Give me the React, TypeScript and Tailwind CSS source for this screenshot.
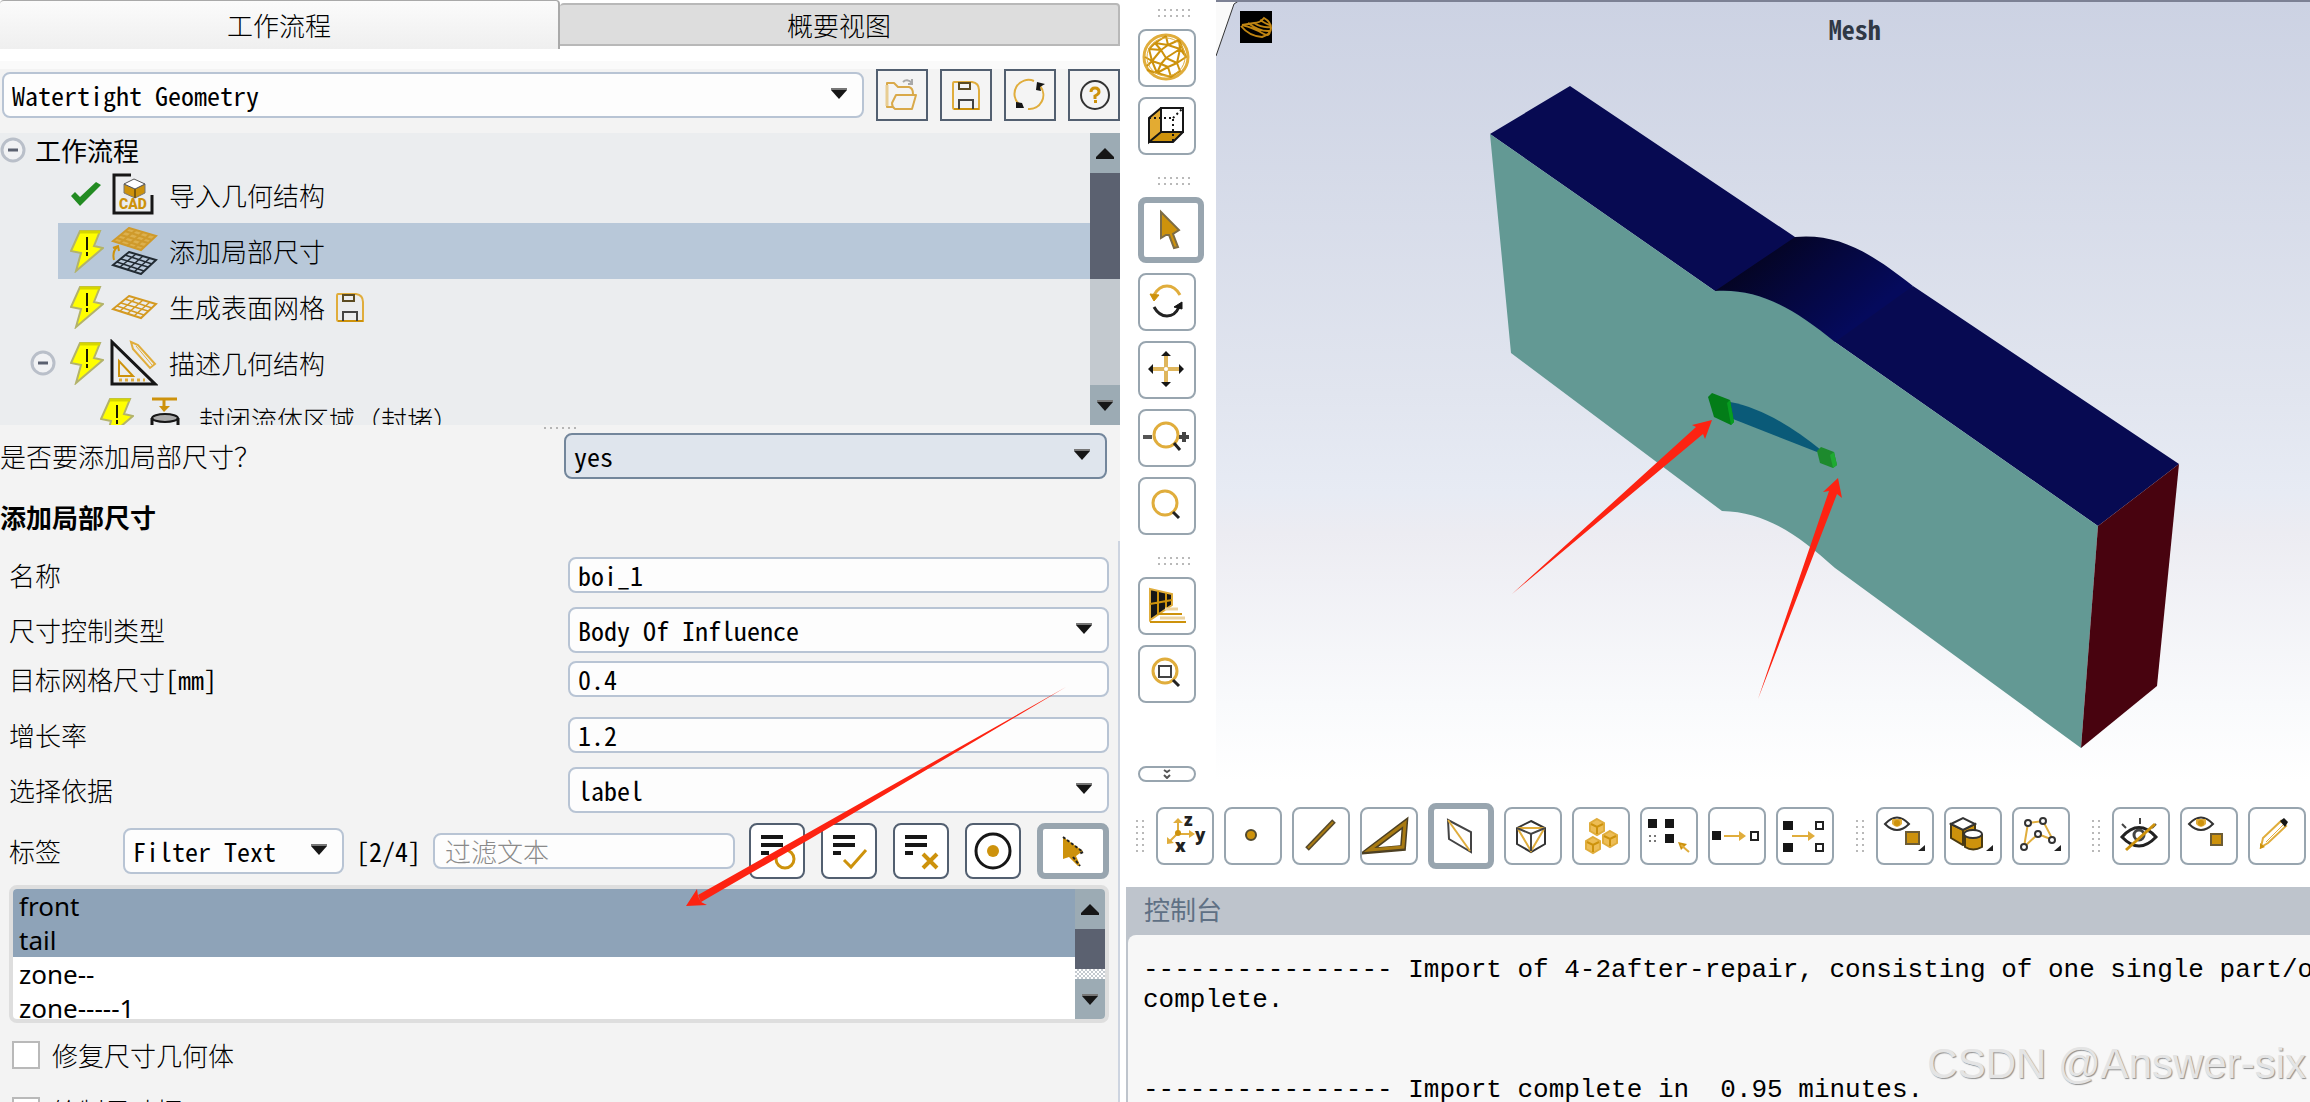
import React from "react";

const GOLD = "#cd920c";
const LIGHT_GOLD = "#e0ad3c";
const INK = "#161616";

type IconProps = { w?: number; h?: number; children: React.ReactNode };

function Icon({ w = 58, h = 58, children }: IconProps) {
  return (
    <svg width={w} height={h} viewBox={`0 0 ${w} ${h}`} fill="none" aria-hidden="true" className="block shrink-0">
      {children}
    </svg>
  );
}

/* ---------- shared pieces ---------- */

function Caret({ up = false }: { up?: boolean }) {
  return (
    <svg width="18" height="11" viewBox="0 0 18 11" aria-hidden="true" className="block">
      {up ? (
        <path d="M9 0 18 9v2H0V9z" fill={INK} />
      ) : (
        <>
          <path d="M1 0h16v2H1z" fill="#777" />
          <path d="M1 2h16L9 11z" fill={INK} />
        </>
      )}
    </svg>
  );
}

function Combo({ id, label, value, className = "", tone = "light" }: { id: string; label?: string; value: string; className?: string; tone?: "light" | "active" }) {
  return (
    <div className={"relative " + className}>
      <select
        id={id}
        aria-label={label}
        defaultValue={value}
        className={
          "block h-[46px] w-full appearance-none rounded-lg border-2 pr-12 pl-2 font-['Noto_Sans_Mono_CJK_SC','Liberation_Mono',monospace] text-[26px] leading-10 text-black outline-none " +
          (tone === "active" ? "border-[#73869b] bg-[#dfe5ed]" : "border-[#b8c4d4] bg-[#fdfdfd]")
        }
      >
        <option>{value}</option>
      </select>
      <span className="pointer-events-none absolute top-4 right-4">
        <Caret />
      </span>
    </div>
  );
}

function TextField({ id, value }: { id: string; value: string }) {
  return (
    <input
      id={id}
      type="text"
      defaultValue={value}
      className="block h-9 w-full rounded-lg border-2 border-[#b8c4d4] bg-[#fdfdfd] px-2 font-['Noto_Sans_Mono_CJK_SC','Liberation_Mono',monospace] text-[26px] outline-none"
    />
  );
}

function ScrollBar({ children }: { children: React.ReactNode }) {
  return (
    <div className="flex w-[30px] shrink-0 flex-col">
      <button type="button" aria-label="向上滚动" className="flex h-10 shrink-0 items-center justify-center bg-[#9cabb4]">
        <Caret up />
      </button>
      {children}
      <button type="button" aria-label="向下滚动" className="flex h-10 shrink-0 items-center justify-center bg-[#9cabb4]">
        <Caret />
      </button>
    </div>
  );
}

function FormRow({ id, label, children, className = "" }: { id: string; label: React.ReactNode; children: React.ReactNode; className?: string }) {
  return (
    <div className={"grid grid-cols-[559fr_541fr] items-center " + className}>
      <label htmlFor={id} className="flex h-9 items-center">
        {label}
      </label>
      {children}
    </div>
  );
}

/* ---------- header icons (48 × 48) ---------- */

const folderIcon = (
  <Icon w={48} h={48}>
    <g stroke="#d9a94a" strokeWidth="2" strokeLinejoin="round">
      <path d="M15 36H9V12h7l4 4h11q4 1 4 7" />
      <path d="M9 14v21" strokeWidth="3" stroke="#e8cd92" />
      <path d="M18 24h20l-4 14H17q-3-2-3-6z" />
    </g>
    <path d="M25 11q4-4 9 1M34 8v5h-4" stroke="#a8a8a8" strokeWidth="2" />
  </Icon>
);

function SaveArt() {
  return (
    <>
      <path d="M2 1h18q7 1 7 8v19H2q-1 0-1-2V3q0-2 1-2z" stroke={LIGHT_GOLD} strokeWidth="2" />
      <path d="M2 28h25" stroke={GOLD} strokeWidth="2" />
      <path d="M7 2h11v6H7z" stroke="#5c4c22" strokeWidth="2" />
      <path d="M7 28V19h14v9" stroke="#444" strokeWidth="2" />
    </>
  );
}

const saveIcon = (
  <Icon w={48} h={48}>
    <g transform="translate(10 10)">
      <SaveArt />
    </g>
  </Icon>
);

const refreshIcon = (
  <Icon w={48} h={48}>
    <path d="M14 34A14 14 0 0 1 28 10M34 15a14 14 0 0 1-12 23" stroke={LIGHT_GOLD} strokeWidth="2" />
    <path d="M31 11l8 2-5 3 1 4-5-1zM10 31l6 1 2 5h-8z" fill={INK} />
  </Icon>
);

const helpIcon = (
  <Icon w={48} h={48}>
    <circle cx="25" cy="24" r="14" stroke="#333" strokeWidth="2" />
    <path d="M21 21q0-4 4-4t4 4q0 2-4 4v3" stroke={GOLD} strokeWidth="3" />
    <path d="M24 29h3v3h-3z" fill={GOLD} />
  </Icon>
);

/* ---------- tree icons ---------- */

const bolt = (
  <Icon w={34} h={44}>
    <path d="M10 2h20l-6 15 9 2L6 42l5-18-10-2z" fill="#ffff00" stroke="#b3b36b" strokeWidth="2" />
    <path d="M10 3h20" stroke="#d6d600" strokeWidth="3" />
    <path d="M17 8v13M17 23v4" stroke="#1c1c00" strokeWidth="2" />
  </Icon>
);

const check = (
  <Icon w={34} h={44}>
    <path d="M1 23l4-4 5 5L26 9l5 3L10 33z" fill="#228b22" />
  </Icon>
);

const cad = (
  <Icon w={48} h={48}>
    <path d="M21 4H4v38h38V24" stroke={INK} strokeWidth="3" />
    <path d="M14 13v9l11 5 10-5v-9l-10 5z" fill={GOLD} stroke="#777" />
    <path d="M14 13l10-5 11 5-10 5z" fill="#fff" stroke="#555" />
    <path d="M25 18v9" stroke="#7a5a10" strokeWidth="2" />
    <text x="23" y="38" textAnchor="middle" fontSize="14" fontWeight="900" fontFamily="Roboto, sans-serif" fill={GOLD}>
      CAD
    </text>
  </Icon>
);

function MeshSheet({ color, dense = false, y = 0 }: { color: string; dense?: boolean; y?: number }) {
  return (
    <g transform={`translate(0 ${y})`} stroke={color} strokeWidth={dense ? 2 : 1.5}>
      <path d="M19 1l27 8-15 14L3 14z" fill={dense ? "#dcb04e" : "none"} strokeWidth="2" />
      <path d="M15 4l27 9M11 8l27 8M7 11l27 9M26 3L10 16M33 5L17 19M40 7L24 21" />
    </g>
  );
}

const localSizing = (
  <Icon w={48} h={48}>
    <MeshSheet color="#cf9a2b" dense />
    <MeshSheet color="#222b33" y={24} />
    <path d="M4 33q-2-8 3-13M3 21l5-2 1 5" stroke={GOLD} strokeWidth="2" />
  </Icon>
);

const surfaceMesh = (
  <Icon w={48} h={48}>
    <MeshSheet color="#d49a22" y={12} />
  </Icon>
);

const describe = (
  <Icon w={48} h={48}>
    <path d="M2 3v42h43z" stroke={INK} strokeWidth="3" />
    <path d="M9 22v15h14z" stroke={GOLD} strokeWidth="2" />
    <path d="M9 41h26" stroke={LIGHT_GOLD} strokeWidth="3" strokeDasharray="3 3" />
    <path d="M21 3l7 3 17 19-5 4-17-19z" stroke={LIGHT_GOLD} strokeWidth="2" />
    <path d="M26 7l16 19" stroke={LIGHT_GOLD} />
  </Icon>
);

const sealIcon = (
  <Icon w={48} h={48}>
    <path d="M12 4h25M24 4v11" stroke={GOLD} strokeWidth="3" />
    <path d="M19 11h11l-6 6z" fill={GOLD} />
    <ellipse cx="25" cy="23" rx="13" ry="4" fill="#aaa" stroke={INK} strokeWidth="2" />
    <path d="M12 23v22h26V23" stroke={INK} strokeWidth="3" />
  </Icon>
);

const minusIcon = (
  <Icon w={26} h={26}>
    <circle cx="13" cy="13" r="11" stroke="#b9bfc9" strokeWidth="3" fill="#f1f2f4" />
    <path d="M8 13h10" stroke="#5b6170" strokeWidth="3" />
  </Icon>
);

function TreeRow({ status, icon, text, selected = false, extra, nested = false, toggle = false }: { status: React.ReactNode; icon: React.ReactNode; text: string; selected?: boolean; extra?: React.ReactNode; nested?: boolean; toggle?: boolean }) {
  return (
    <li className="flex h-14 shrink-0 items-center">
      <div className={"flex shrink-0 items-center justify-end " + (nested ? "w-[88px]" : "w-[58px]")}>
        {toggle && (
          <button type="button" aria-label="折叠" className="mr-[2px]">
            {minusIcon}
          </button>
        )}
      </div>
      <button type="button" className={"flex h-full min-w-0 flex-1 items-center pl-3 text-left " + (selected ? "bg-[#b8c8d9]" : "")}>
        {status}
        <span className="ml-[6px]">{icon}</span>
        <span className="ml-[11px] whitespace-nowrap">{text}</span>
        {extra}
      </button>
    </li>
  );
}

/* ---------- vertical toolbar icons (58 × 58) ---------- */

const meshSphere = (
  <Icon>
    <circle cx="28" cy="28" r="22" stroke={LIGHT_GOLD} strokeWidth="3" />
    <g stroke={GOLD} strokeWidth="2" strokeLinejoin="round">
      <path d="M28 7L17 14 11 20 14 32 9 37M28 7l2 9 11-5M17 14l13 2 12 4-1-9M11 20l12 1-6-7M30 16l-7 5 5 8 14-9 6 8-9 6 3 8M23 21l-9 11 9 3 5-6 11 5-9 4-7-3-4 9-10-3M14 32l5 12 11-6 3 10 9-6-3-8M19 44l14 4M7 28l7 4M42 20l-3 14M41 11l7 17" />
    </g>
    <circle cx="28" cy="28" r="19" stroke={LIGHT_GOLD} strokeWidth="1" />
  </Icon>
);

const projectionCube = (
  <Icon>
    <path d="M23 11L11 21v24l12-10z" fill="#e3ab32" />
    <path d="M23 35h22L35 45H11z" fill={GOLD} />
    <path d="M23 11h22v24H23z" stroke={INK} strokeWidth="2" />
    <path d="M23 11L11 21v24l12-10M11 45h24l10-10" stroke={INK} strokeWidth="2" />
    <path d="M11 21h24v24M35 21l10-10" stroke={INK} strokeWidth="2" strokeDasharray="2 3" />
  </Icon>
);

const pointer = (
  <Icon w={54} h={54}>
    <path d="M17 9v26l5-3h3l5 13 4-1-5-13 6-4z" fill={GOLD} stroke="#7d6c45" strokeWidth="2" />
  </Icon>
);

const rotateIcon = (
  <Icon>
    <path d="M16 22q5-9 13-9t13 9" stroke={LIGHT_GOLD} strokeWidth="3" />
    <path d="M12 21l9 1-5 6z" fill={GOLD} stroke={GOLD} />
    <path d="M16 34q5 9 13 9t12-9" stroke="#222" strokeWidth="3" />
    <path d="M36 34l8-5v7z" fill={INK} stroke={INK} />
  </Icon>
);

const panIcon = (
  <Icon>
    <path d="M28 14v28M14 28h28" stroke="#dfb65c" strokeWidth="4" />
    <circle cx="28" cy="28" r="2" fill="#fff" />
    <path d="M28 10l5 5H23zM28 46l5-5H23zM10 28l5-5v10zM46 28l-5-5v10z" fill={INK} />
  </Icon>
);

const zoomIcon = (
  <Icon>
    <path d="M5 28h9" stroke="#555" strokeWidth="4" />
    <circle cx="28" cy="26" r="12" stroke={LIGHT_GOLD} strokeWidth="3" />
    <path d="M36 34l6 7" stroke="#222" strokeWidth="3" />
    <path d="M41 28h10M46 23v10" stroke="#444" strokeWidth="4" />
  </Icon>
);

const magnifier = (
  <Icon>
    <circle cx="27" cy="26" r="12" stroke={LIGHT_GOLD} strokeWidth="3" />
    <path d="M35 35l6 6" stroke="#222" strokeWidth="3" />
  </Icon>
);

const perspective = (
  <Icon>
    <path d="M12 12l22 5v11L12 43z" fill={INK} stroke={LIGHT_GOLD} strokeWidth="2" />
    <path d="M12 27l22-4M20 14v24M28 16v16" stroke={GOLD} strokeWidth="2" />
    <path d="M27 32h13M22 41h25" stroke="#ecd3a0" strokeWidth="3" />
    <path d="M21 37h23M12 45h36" stroke={GOLD} strokeWidth="2" />
  </Icon>
);

const zoomArea = (
  <Icon>
    <circle cx="27" cy="26" r="12" stroke={LIGHT_GOLD} strokeWidth="3" />
    <path d="M21 21h12v11H21z" stroke="#444" strokeWidth="2" />
    <path d="M35 35l6 6" stroke="#222" strokeWidth="3" />
  </Icon>
);

/* ---------- horizontal toolbar icons ---------- */

const axesIcon = (
  <Icon>
    <path d="M22 26V15M22 27h13M21 27l-7 7" stroke={LIGHT_GOLD} strokeWidth="2" />
    <path d="M22 11l5 5H17zM39 27l-6-4v8zM11 37v-7l7 6z" fill={LIGHT_GOLD} />
    <circle cx="22" cy="26" r="3" fill={GOLD} />
    <g fontFamily="Open Sans, sans-serif" fontSize="17" fontWeight="800" fill="#222">
      <text x="28" y="19">z</text>
      <text x="39" y="34">y</text>
      <text x="19" y="45">x</text>
    </g>
  </Icon>
);

const pointIcon = (
  <Icon>
    <circle cx="27" cy="28" r="5" fill={GOLD} stroke="#51492f" strokeWidth="2" />
  </Icon>
);

const edgeIcon = (
  <Icon>
    <path d="M15 42l27-28" stroke="#55482a" strokeWidth="5" />
    <path d="M16 41l25-26" stroke="#a87a12" strokeWidth="2" />
  </Icon>
);

const faceIcon = (
  <Icon>
    <path d="M8 44l37-28-2 25z" stroke="#4d4023" strokeWidth="6" />
    <path d="M9 43l36-27-2 24z" stroke="#a87a12" strokeWidth="3" />
  </Icon>
);

const zoneIcon = (
  <Icon w={54} h={54}>
    <path d="M14 11l23 12v20L15 30z" stroke="#444" strokeWidth="2" />
    <path d="M14 11l22 31" stroke={LIGHT_GOLD} strokeWidth="2" />
  </Icon>
);

const bodyIcon = (
  <Icon>
    <path d="M27 14l14 7v16l-14 8-14-8V21z" stroke="#333" strokeWidth="2" />
    <path d="M13 21h28M14 22l13 22 13-22M27 28v16" stroke={LIGHT_GOLD} strokeWidth="2" />
    <path d="M13 21l14 6 14-6M27 27v17" stroke="#444" strokeWidth="2" />
  </Icon>
);

function MiniCube({ x, y }: { x: number; y: number }) {
  return (
    <g transform={`translate(${x} ${y})`}>
      <path d="M0-8l7 4v8l-7 4-7-4v-8z" fill="#edbd55" stroke={LIGHT_GOLD} strokeWidth="2" />
      <path d="M-6-3l6 3 6-3M0 0v7" stroke={GOLD} strokeWidth="2" />
    </g>
  );
}

const regionIcon = (
  <Icon>
    <MiniCube x={25} y={20} />
    <MiniCube x={38} y={32} />
    <MiniCube x={21} y={38} />
  </Icon>
);

const pickIcon = (
  <Icon>
    <path d="M8 12h9v9H8zM25 12h9v9h-9zM25 27h9v9h-9z" fill={INK} />
    <path d="M9 29h8M9 34h8" stroke="#777" strokeWidth="2" strokeDasharray="2 3" />
    <path d="M38 35l9 2-6 6z" fill={GOLD} />
    <path d="M41 38l8 7" stroke={LIGHT_GOLD} strokeWidth="2" />
  </Icon>
);

const moveOne = (
  <Icon>
    <path d="M4 24h9v9H4z" fill={INK} />
    <path d="M16 29h17" stroke={LIGHT_GOLD} strokeWidth="2" />
    <path d="M31 24l7 5-7 5z" fill={LIGHT_GOLD} />
    <path d="M43 25h7v8h-7z" stroke="#222" strokeWidth="2" />
  </Icon>
);

const moveMany = (
  <Icon>
    <path d="M7 14h10v9H7zM7 36h10v9H7z" fill={INK} />
    <path d="M16 29h18" stroke={LIGHT_GOLD} strokeWidth="2" />
    <path d="M32 24l7 5-7 5z" fill={LIGHT_GOLD} />
    <path d="M40 15h7v7h-7zM40 37h7v7h-7z" stroke="#222" strokeWidth="2" />
  </Icon>
);

function EyeArt() {
  return (
    <>
      <path d="M9 17q12-13 24 0-12 12-24 0z" stroke="#333" strokeWidth="2" fill="#fff" />
      <path d="M16 12h10v5q-5 6-10 0z" fill={LIGHT_GOLD} />
      <circle cx="21" cy="16" r="3" fill={GOLD} />
    </>
  );
}

const cornerMark = <path d="M49 38v6h-7z" fill="#222" />;

const showIcon = (
  <Icon>
    <EyeArt />
    <path d="M30 25h13v12H30z" fill={GOLD} stroke="#6d5c34" strokeWidth="2" />
    {cornerMark}
  </Icon>
);

const solidsIcon = (
  <Icon>
    <path d="M7 17v14l12 7 12-7V17l-12 6z" fill={GOLD} stroke="#4a3a10" strokeWidth="2" />
    <path d="M7 17l12-6 12 6-12 6z" fill="#fff" stroke="#333" strokeWidth="2" />
    <path d="M19 23v15" stroke="#4a3a10" strokeWidth="2" />
    <path d="M21 28v12q8 5 17 0V28z" fill={GOLD} stroke="#4a3a10" strokeWidth="2" />
    <ellipse cx="29" cy="27" rx="9" ry="4" fill="#fff" stroke="#333" strokeWidth="2" />
    {cornerMark}
  </Icon>
);

const nodesIcon = (
  <Icon>
    <path d="M16 16l15-2 10 19-15-6-14 13z" stroke={LIGHT_GOLD} strokeWidth="2" />
    <g fill="#fff" stroke="#333" strokeWidth="2">
      <circle cx="16" cy="16" r="3" />
      <circle cx="31" cy="14" r="3" />
      <circle cx="26" cy="27" r="3" />
      <circle cx="40" cy="33" r="3" />
      <circle cx="12" cy="40" r="3" />
    </g>
    {cornerMark}
  </Icon>
);

const hideIcon = (
  <Icon>
    <path d="M10 30q17-19 34 0-17 18-34 0z" stroke="#222" strokeWidth="3" />
    <circle cx="27" cy="28" r="5" stroke="#444" strokeWidth="3" />
    <path d="M10 17l4 4M28 11v6M44 17l-4 4" stroke="#444" strokeWidth="2" />
    <path d="M43 17L14 43" stroke={GOLD} strokeWidth="3" />
  </Icon>
);

const showOnlyIcon = (
  <Icon>
    <EyeArt />
    <path d="M31 27h11v11H31z" fill={GOLD} stroke="#6d5c34" strokeWidth="2" />
  </Icon>
);

const pencilIcon = (
  <Icon>
    <path d="M13 40l2-9 18-17 5 5-18 17z" stroke={LIGHT_GOLD} strokeWidth="2" />
    <path d="M18 35l17-17" stroke={LIGHT_GOLD} />
    <path d="M12 42v-6l5 4z" fill={GOLD} />
    <path d="M32 14l4-3 4 4-3 5z" fill={INK} />
  </Icon>
);

/* ---------- selection buttons (52 × 52) ---------- */

const lines = <path d="M10 12h22M10 20h22M10 28h8" stroke={INK} strokeWidth="4" />;

const selectRing = (
  <Icon w={52} h={52}>
    {lines}
    <circle cx="34" cy="34" r="9" stroke={GOLD} strokeWidth="3" fill="#fff" />
  </Icon>
);
const selectAll = (
  <Icon w={52} h={52}>
    {lines}
    <path d="M21 35l7 7 15-17" stroke={GOLD} strokeWidth="3" />
  </Icon>
);
const selectNone = (
  <Icon w={52} h={52}>
    {lines}
    <path d="M28 29l14 14M42 29L28 43" stroke={GOLD} strokeWidth="4" />
  </Icon>
);
const selectTarget = (
  <Icon w={52} h={52}>
    <circle cx="26" cy="26" r="17" stroke={INK} strokeWidth="3" />
    <circle cx="26" cy="26" r="6" fill={GOLD} />
  </Icon>
);
const selectPointer = (
  <Icon w={52} h={44}>
    <path d="M16 8v22l6-2 9 9 2-1-4-9 7-5z" fill={GOLD} />
    <path d="M16 8l20 15-4 2M26 28l7 9" stroke="#222" strokeWidth="2" strokeDasharray="3 2" />
  </Icon>
);

/* ---------- toolbar building blocks ---------- */

function ToolButton({ label, active = false, children }: { label: string; active?: boolean; children: React.ReactNode }) {
  return (
    <button
      type="button"
      aria-label={label}
      className={
        "flex shrink-0 items-center justify-center overflow-hidden rounded-lg bg-white " +
        (active ? "size-[66px] border-6 border-[#98a5af]" : "size-[58px] border-2 border-[#98a5af]")
      }
    >
      {children}
    </button>
  );
}

function DotsAcross() {
  return (
    <svg width="32" height="8" viewBox="0 0 32 8" fill="#b9b9b9" aria-hidden="true" className="ml-5 block shrink-0">
      {[0, 6, 12, 18, 24, 30].map((x) => (
        <path key={x} d={`M${x} 0h2v2h-2zM${x} 6h2v2h-2z`} />
      ))}
    </svg>
  );
}

function DotsDown() {
  return (
    <svg width="8" height="32" viewBox="0 0 8 32" fill="#b9b9b9" aria-hidden="true" className="mr-[2px] block shrink-0">
      {[0, 6, 12, 18, 24, 30].map((y) => (
        <path key={y} d={`M0 ${y}h2v2H0zM6 ${y}h2v2H6z`} />
      ))}
    </svg>
  );
}

/* ---------- left panel ---------- */

function HeaderButton({ label, children }: { label: string; children: React.ReactNode }) {
  return (
    <button type="button" aria-label={label} className="flex size-[52px] shrink-0 items-center justify-center border-2 border-[#525f70] bg-[#f4f4f4]">
      {children}
    </button>
  );
}

function ListButton({ label, children }: { label: string; children: React.ReactNode }) {
  return (
    <button type="button" aria-label={label} className="flex size-14 shrink-0 items-center justify-center rounded-lg border-2 border-[#525f70] bg-white">
      {children}
    </button>
  );
}

function WorkflowPanel() {
  return (
    <section className="relative flex min-w-0 flex-col overflow-hidden bg-[#f3f3f3]">
      <div role="tablist" className="grid h-[61px] shrink-0 grid-cols-2 items-start bg-white">
        <button role="tab" aria-selected="true" type="button" className="h-[49px] rounded-t-sm border-t border-r-2 border-[#a9a9a9] bg-gradient-to-b from-[#fbfbfb] to-[#efefef]">
          工作流程
        </button>
        <button role="tab" aria-selected="false" type="button" className="mt-[3px] h-[43px] rounded-t-sm border-2 border-l-0 border-[#b8b8b8] bg-[#dddddd]">
          概要视图
        </button>
      </div>

      <div className="flex shrink-0 items-center gap-3 border-t-8 border-[#fafafa] pb-3 pl-[2px]">
        <Combo id="workflow" label="工作流程" value="Watertight Geometry" className="flex-1" />
        <HeaderButton label="打开">{folderIcon}</HeaderButton>
        <HeaderButton label="保存">{saveIcon}</HeaderButton>
        <HeaderButton label="重置">{refreshIcon}</HeaderButton>
        <HeaderButton label="帮助">{helpIcon}</HeaderButton>
      </div>

      <div className="flex h-[292px] shrink-0 bg-[#ebedef]">
        <div className="min-w-0 flex-1 overflow-hidden">
          <div className="flex h-[34px] items-center gap-[9px]">
            <button type="button" aria-label="折叠">
              {minusIcon}
            </button>
            <span className="font-normal">工作流程</span>
          </div>
          <ul className="flex flex-col">
            <TreeRow status={check} icon={cad} text="导入几何结构" />
            <TreeRow status={bolt} icon={localSizing} text="添加局部尺寸" selected />
            <TreeRow
              status={bolt}
              icon={surfaceMesh}
              text="生成表面网格"
              extra={
                <span className="ml-[11px]">
                  <Icon w={28} h={29}>
                    <SaveArt />
                  </Icon>
                </span>
              }
            />
            <TreeRow status={bolt} icon={describe} text="描述几何结构" toggle />
            <TreeRow status={bolt} icon={sealIcon} text="封闭流体区域（封堵）" nested />
          </ul>
        </div>
        <ScrollBar>
          <div className="flex-1 bg-[#5b6170]" />
          <div className="flex-1 bg-[#c3c9cf]" />
        </ScrollBar>
      </div>

      <div className="flex h-2 shrink-0 justify-center pt-[2px]">
        <svg width="32" height="2" viewBox="0 0 32 2" fill="#b5b5b5" aria-hidden="true">
          {[0, 6, 12, 18, 24, 30].map((x) => (
            <path key={x} d={`M${x} 0h2v2h-2z`} />
          ))}
        </svg>
      </div>

      <div className="grid shrink-0 grid-cols-[564fr_543fr] items-center pr-[13px]">
        <label htmlFor="add-local">是否要添加局部尺寸？</label>
        <Combo id="add-local" value="yes" tone="active" />
      </div>

      <h2 className="mt-5 mb-[6px] shrink-0 leading-9 font-bold">添加局部尺寸</h2>

      <form className="flex-1 border-r-2 border-[#cdd4e0] pt-4 pr-[9px] pl-[9px]">
        <FormRow id="name" label="名称">
          <TextField id="name" value="boi_1" />
        </FormRow>
        <FormRow id="control-type" label="尺寸控制类型" className="mt-[14px]">
          <Combo id="control-type" value="Body Of Influence" />
        </FormRow>
        <FormRow
          id="target-size"
          label={
            <>
              目标网格尺寸<span className="font-['Noto_Sans_Mono_CJK_SC','Liberation_Mono',monospace]">[mm]</span>
            </>
          }
          className="mt-2"
        >
          <TextField id="target-size" value="0.4" />
        </FormRow>
        <FormRow id="growth" label="增长率" className="mt-5">
          <TextField id="growth" value="1.2" />
        </FormRow>
        <FormRow id="select-by" label="选择依据" className="mt-[14px]">
          <Combo id="select-by" value="label" />
        </FormRow>

        <div className="mt-[10px] flex items-center">
          <label htmlFor="filter-kind" className="w-[114px] shrink-0">
            标签
          </label>
          <Combo id="filter-kind" value="Filter Text" className="w-[221px] shrink-0" />
          <span className="mx-3 shrink-0 font-['Noto_Sans_Mono_CJK_SC','Liberation_Mono',monospace]">[2/4]</span>
          <input
            type="text"
            aria-label="过滤文本"
            placeholder="过滤文本"
            className="block h-9 min-w-0 flex-1 rounded-lg border-2 border-[#b8c4d4] bg-[#fdfdfd] px-[10px] outline-none placeholder:text-[#8a8a8a]"
          />
          <div className="ml-[14px] flex shrink-0 gap-4">
            <ListButton label="切换">{selectRing}</ListButton>
            <ListButton label="全选">{selectAll}</ListButton>
            <ListButton label="取消全选">{selectNone}</ListButton>
            <ListButton label="高亮">{selectTarget}</ListButton>
            <button type="button" aria-label="拾取" aria-pressed="true" className="flex h-14 w-[72px] items-center justify-center rounded-lg border-6 border-[#98a5af] bg-white">
              {selectPointer}
            </button>
          </div>
        </div>

        <div className="mt-[6px] flex h-[138px] overflow-hidden rounded-lg border-4 border-[#dedede] bg-white">
          <ul role="listbox" aria-label="标签" aria-multiselectable="true" className="min-w-0 flex-1 overflow-hidden font-['Noto_Sans','Open_Sans',sans-serif] leading-[34px] font-normal">
            <li role="option" aria-selected="true" className="bg-[#8ea3b8] px-[6px]">
              front
            </li>
            <li role="option" aria-selected="true" className="bg-[#8ea3b8] px-[6px]">
              tail
            </li>
            <li role="option" aria-selected="false" className="px-[6px]">
              zone--
            </li>
            <li role="option" aria-selected="false" className="px-[6px]">
              zone-----1
            </li>
          </ul>
          <ScrollBar>
            <div className="h-10 bg-[#5b6170]" />
            <div className="flex-1 bg-[repeating-conic-gradient(#c3c9cf_0_25%,#ffffff_0_50%)] bg-[length:4px_4px]" />
          </ScrollBar>
        </div>

        <label className="mt-[18px] flex h-7 items-center gap-3 pl-[3px]">
          <input type="checkbox" className="size-7 appearance-none border-2 border-[#b9b9b9] bg-white" />
          修复尺寸几何体
        </label>
        <label className="mt-7 flex h-7 items-center gap-3 pl-[3px]">
          <input type="checkbox" className="size-7 appearance-none border-2 border-[#b9b9b9] bg-white" />
          绘制尺寸框
        </label>
      </form>

      {/* annotation arrow pointing at the label list */}
      <svg width="380" height="219" viewBox="0 0 380 219" aria-hidden="true" className="pointer-events-none absolute top-[687px] left-[686px]">
        <path d="M380 0L12 208l3 7 109-63zM0 219L11 202l1 7 3 6 6 3z" fill="#fd2312" />
      </svg>
    </section>
  );
}

/* ---------- graphics view ---------- */

function MeshScene() {
  return (
    <svg viewBox="1216 2 1094 780" role="img" aria-label="Mesh" className="block h-full w-full">
      <defs>
        <linearGradient id="bump" gradientUnits="userSpaceOnUse" x1="1750" y1="250" x2="1830" y2="345">
          <stop offset="0" stopColor="#04041f" />
          <stop offset="0.5" stopColor="#05073f" />
          <stop offset="1" stopColor="#050a5c" />
        </linearGradient>
      </defs>
      <path d="M1490 134L1570 86 1795 237 1818 320 1913 286 2179 464 2098 526 1835 342 1715 291z" fill="#070a52" />
      <path d="M1795 237C1839 233 1871 253 1913 286L1835 342C1792 307 1757 288 1715 291z" fill="url(#bump)" />
      <path d="M1490 134L1715 291C1757 288 1792 307 1835 342L2098 526 2081 748 1835 568C1799 536 1767 512 1722 511L1511 353z" fill="#639994" />
      <path d="M2179 464L2098 526 2081 748 2157 686z" fill="#48030f" />
      <path d="M1730 402C1762 408 1794 428 1821 450L1817 452 1733 419z" fill="#0a5a78" />
      <path d="M1708 397l4-4 18 7 4 22-3 3-17-8z" fill="#037d18" />
      <path d="M1727 403l3-3 4 22-3 3z" fill="#079d20" />
      <path d="M1817 451l4-4 13 5 3 13-4 3-13-5z" fill="#1d8a2d" />
      <path d="M1830 455l4-3 3 13-4 3z" fill="#1faa32" />
      <path d="M1512 594L1696 427 1692 425 1712 420 1705 439 1703 434z" fill="#fd2312" />
      <path d="M1758 699L1829 491 1823 492 1838 478 1842 498 1837 494z" fill="#fd2312" />
    </svg>
  );
}

function GraphicsView() {
  return (
    <div className="relative min-w-0 flex-1 overflow-hidden border-t-2 border-[#7c8194] bg-[linear-gradient(to_bottom,#ccd2e3_0%,#e1e5ef_50%,#e7ebf4_63%,#ececf2_68%,#f9fafc_90%,#ffffff_100%)]">
      <MeshScene />
      <svg width="26" height="56" viewBox="0 0 26 56" aria-hidden="true" className="absolute -top-[2px] left-0">
        <path d="M0 0h24l-6 4L0 56z" fill="#fafafa" />
        <path d="M24 0l-6 4L0 56" stroke="#333" fill="none" />
      </svg>
      <div className="absolute top-[9px] left-6">
        <Icon w={32} h={32}>
          <path d="M0 0h32v32H0z" fill="#000" />
          <g stroke="#c08512" strokeWidth="2">
            <path d="M1 15q8 10 21 11 9-3 9-9t-7-10q-4 5-10 5L2 14M2 14q12 3 20 8t8-3M8 12q12 9 22 8M14 12q8 5 16 4M20 9q6 4 10 5" />
          </g>
        </Icon>
      </div>
      <h1 className="absolute top-[9px] left-[56%] font-['Noto_Sans_Mono_CJK_SC','Liberation_Mono',monospace] leading-9 font-bold text-[#2f3845]">Mesh</h1>
    </div>
  );
}

function ViewTools() {
  return (
    <div role="toolbar" aria-label="视图" className="flex w-24 shrink-0 flex-col items-start gap-[10px] bg-white pt-[9px] pl-[18px]">
      <div className="mb-[2px]">
        <DotsAcross />
      </div>
      <ToolButton label="网格显示">{meshSphere}</ToolButton>
      <ToolButton label="投影">{projectionCube}</ToolButton>
      <div className="mt-3 mb-[2px]">
        <DotsAcross />
      </div>
      <ToolButton label="选择" active>
        {pointer}
      </ToolButton>
      <ToolButton label="旋转">{rotateIcon}</ToolButton>
      <ToolButton label="平移">{panIcon}</ToolButton>
      <ToolButton label="缩放">{zoomIcon}</ToolButton>
      <ToolButton label="放大镜">{magnifier}</ToolButton>
      <div className="mt-3 mb-[2px]">
        <DotsAcross />
      </div>
      <ToolButton label="透视">{perspective}</ToolButton>
      <ToolButton label="框选缩放">{zoomArea}</ToolButton>
      <button type="button" aria-label="更多" className="mt-auto flex h-4 w-[58px] shrink-0 items-center justify-center rounded-full border-2 border-[#98a5af] bg-white">
        <Icon w={8} h={10}>
          <path d="M1 1l3 2 3-2M1 6l3 3 3-3" stroke="#555" strokeWidth="2" />
        </Icon>
      </button>
    </div>
  );
}

function SelectionTools() {
  return (
    <div role="toolbar" aria-label="选择" className="flex h-[105px] shrink-0 items-center gap-[10px] overflow-hidden bg-white pt-[3px] pl-4">
      <DotsDown />
      <ToolButton label="坐标">{axesIcon}</ToolButton>
      <ToolButton label="节点">{pointIcon}</ToolButton>
      <ToolButton label="边">{edgeIcon}</ToolButton>
      <ToolButton label="面">{faceIcon}</ToolButton>
      <ToolButton label="区域" active>
        {zoneIcon}
      </ToolButton>
      <ToolButton label="体">{bodyIcon}</ToolButton>
      <ToolButton label="对象">{regionIcon}</ToolButton>
      <ToolButton label="拾取">{pickIcon}</ToolButton>
      <ToolButton label="移动">{moveOne}</ToolButton>
      <ToolButton label="批量移动">{moveMany}</ToolButton>
      <div className="ml-3">
        <DotsDown />
      </div>
      <ToolButton label="显示">{showIcon}</ToolButton>
      <ToolButton label="实体">{solidsIcon}</ToolButton>
      <ToolButton label="节点图">{nodesIcon}</ToolButton>
      <div className="ml-3">
        <DotsDown />
      </div>
      <ToolButton label="隐藏">{hideIcon}</ToolButton>
      <ToolButton label="仅显示">{showOnlyIcon}</ToolButton>
      <ToolButton label="编辑">{pencilIcon}</ToolButton>
    </div>
  );
}

function Console() {
  return (
    <section className="relative ml-[6px] flex min-h-0 flex-[215] flex-col overflow-hidden bg-[#bec4cc]">
      <h2 className="h-12 shrink-0 pl-[18px] leading-[44px] font-normal text-[#5f7084]">控制台</h2>
      <div className="ml-[2px] flex-1 overflow-hidden rounded-tl-lg bg-[#f7f7f7] pt-5 pl-[15px]">
        <pre className="font-['Liberation_Mono',monospace] leading-[30px] whitespace-pre text-black">
          {"---------------- Import of 4-2after-repair, consisting of one single part/o\ncomplete.\n\n\n---------------- Import complete in  0.95 minutes."}
        </pre>
      </div>
      <p className="pointer-events-none absolute right-1 bottom-[14px] font-['Liberation_Sans',sans-serif] text-[42px] leading-[48px] whitespace-nowrap text-[#e4e4e4] [text-shadow:1px_1px_1px_#8f8f8f]">
        CSDN @Answer-six
      </p>
    </section>
  );
}

export default function App() {
  return (
    <div className="grid h-screen grid-cols-[1120fr_1190fr] overflow-hidden bg-white font-['Noto_Sans_CJK_SC',sans-serif] text-[26px] leading-9 font-light text-black">
      <WorkflowPanel />
      <main className="flex min-w-0 flex-col overflow-hidden">
        <div className="flex min-h-0 flex-[782]">
          <ViewTools />
          <GraphicsView />
        </div>
        <SelectionTools />
        <Console />
      </main>
    </div>
  );
}
